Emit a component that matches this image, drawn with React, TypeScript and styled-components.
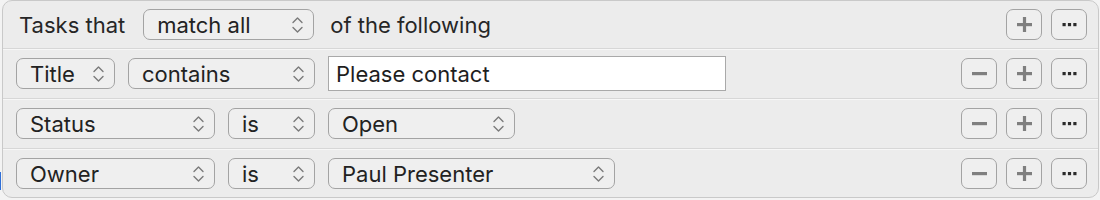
import React from "react";
import styled, { createGlobalStyle } from "styled-components";

const Global = createGlobalStyle`
  html, body {
    margin: 0;
    padding: 0;
    background: #f3f3f3;
    font-family: "Inter", "Liberation Sans", sans-serif;
  }
`;

const Page = styled.div`
  display: flex;
  width: 1100px;
  height: 200px;
  overflow: hidden;
`;

const Gutter = styled.div`
  width: 2px;
  flex: none;
  display: flex;
  flex-direction: column;
  .blue {
    margin-top: 172px;
    height: 18px;
    width: 1px;
    background: #2f6fd8;
  }
`;

const Panel = styled.div`
  width: 1097px;
  height: 198px;
  box-sizing: border-box;
  border: 1px solid #c9c9c9;
  border-radius: 10px;
  background: #ececec;
  display: flex;
  flex-direction: column;
  overflow: hidden;
`;

const Row = styled.div<{ $first?: boolean }>`
  display: flex;
  align-items: center;
  height: ${(p) => (p.$first ? 47 : 49)}px;
  flex: none;
  padding: 0 11px 0 13px;
  border-top: ${(p) => (p.$first ? "none" : "1px solid #d7d7d7")};
  box-shadow: ${(p) => (p.$first ? "none" : "inset 0 1px 0 #f7f7f7")};
  gap: 13px;
`;

const Label = styled.span<{ $pad?: number }>`
  font-size: 22px;
  color: #262626;
  padding-left: ${(p) => p.$pad ?? 0}px;
  margin-right: 5px;
  white-space: nowrap;
`;

const Popup = styled.div<{ $w: number }>`
  box-sizing: border-box;
  width: ${(p) => p.$w}px;
  height: 31px;
  flex: none;
  border: 1px solid #a3a3a3;
  border-radius: 7px;
  background: #efefef;
  display: flex;
  align-items: center;
  justify-content: space-between;
  padding: 0 10px 0 13px;
  font-size: 22px;
  color: #222;
  white-space: nowrap;
  svg {
    flex: none;
  }
`;

const Field = styled.div`
  box-sizing: border-box;
  width: 398px;
  height: 35px;
  flex: none;
  border: 1px solid #a9a9a9;
  background: #fff;
  display: flex;
  align-items: center;
  padding-left: 7px;
  font-size: 22px;
  color: #1e1e1e;
`;

const Spacer = styled.div`
  flex: 1;
`;

const Buttons = styled.div`
  display: flex;
  gap: 9px;
`;

const IconButton = styled.div`
  box-sizing: border-box;
  width: 36px;
  height: 31px;
  border: 1px solid #a3a3a3;
  border-radius: 7px;
  background: #efefef;
  display: flex;
  align-items: center;
  justify-content: center;
`;

const Chevrons = () => (
  <svg width="11" height="16" viewBox="0 0 11 16">
    <path
      d="M1 5.5 L5.5 1 L10 5.5 M1 10.5 L5.5 15 L10 10.5"
      fill="none"
      stroke="#7a7a7a"
      strokeWidth="1.4"
      strokeLinecap="round"
      strokeLinejoin="round"
    />
  </svg>
);

const Minus = () => (
  <svg width="15" height="15" viewBox="0 0 15 15">
    <rect x="0" y="6" width="15" height="3.2" fill="#7f7f7f" />
  </svg>
);

const Plus = () => (
  <svg width="15" height="15" viewBox="0 0 15 15">
    <rect x="0" y="6" width="15" height="3.2" fill="#7f7f7f" />
    <rect x="5.9" y="0" width="3.2" height="15" fill="#7f7f7f" />
  </svg>
);

const More = () => (
  <svg width="15" height="5" viewBox="0 0 15 5">
    <rect x="0.5" y="1" width="3.2" height="3.2" fill="#2b2b2b" />
    <rect x="5.9" y="1" width="3.2" height="3.2" fill="#2b2b2b" />
    <rect x="11.3" y="1" width="3.2" height="3.2" fill="#2b2b2b" />
  </svg>
);

const Select = ({ w, children }: { w: number; children: React.ReactNode }) => (
  <Popup $w={w}>
    <span>{children}</span>
    <Chevrons />
  </Popup>
);

const RowButtons = ({ remove = true }: { remove?: boolean }) => (
  <Buttons>
    {remove && (
      <IconButton>
        <Minus />
      </IconButton>
    )}
    <IconButton>
      <Plus />
    </IconButton>
    <IconButton>
      <More />
    </IconButton>
  </Buttons>
);

const rules = [
  { field: "Status", fw: 199, op: "is", value: "Open", vw: 187 },
  { field: "Owner", fw: 199, op: "is", value: "Paul Presenter", vw: 287 },
];

export default function App() {
  return (
    <Page>
      <Global />
      <Gutter>
        <div className="blue" />
      </Gutter>
      <Panel>
        <Row $first>
          <Label $pad={3}>Tasks that</Label>
          <Select w={171}>match all</Select>
          <Label $pad={3}>of the following</Label>
          <Spacer />
          <RowButtons remove={false} />
        </Row>
        <Row>
          <Select w={99}>Title</Select>
          <Select w={187}>contains</Select>
          <Field>Please contact</Field>
          <Spacer />
          <RowButtons />
        </Row>
        {rules.map((r) => (
          <Row key={r.field}>
            <Select w={r.fw}>{r.field}</Select>
            <Select w={87}>{r.op}</Select>
            <Select w={r.vw}>{r.value}</Select>
            <Spacer />
            <RowButtons />
          </Row>
        ))}
      </Panel>
    </Page>
  );
}
